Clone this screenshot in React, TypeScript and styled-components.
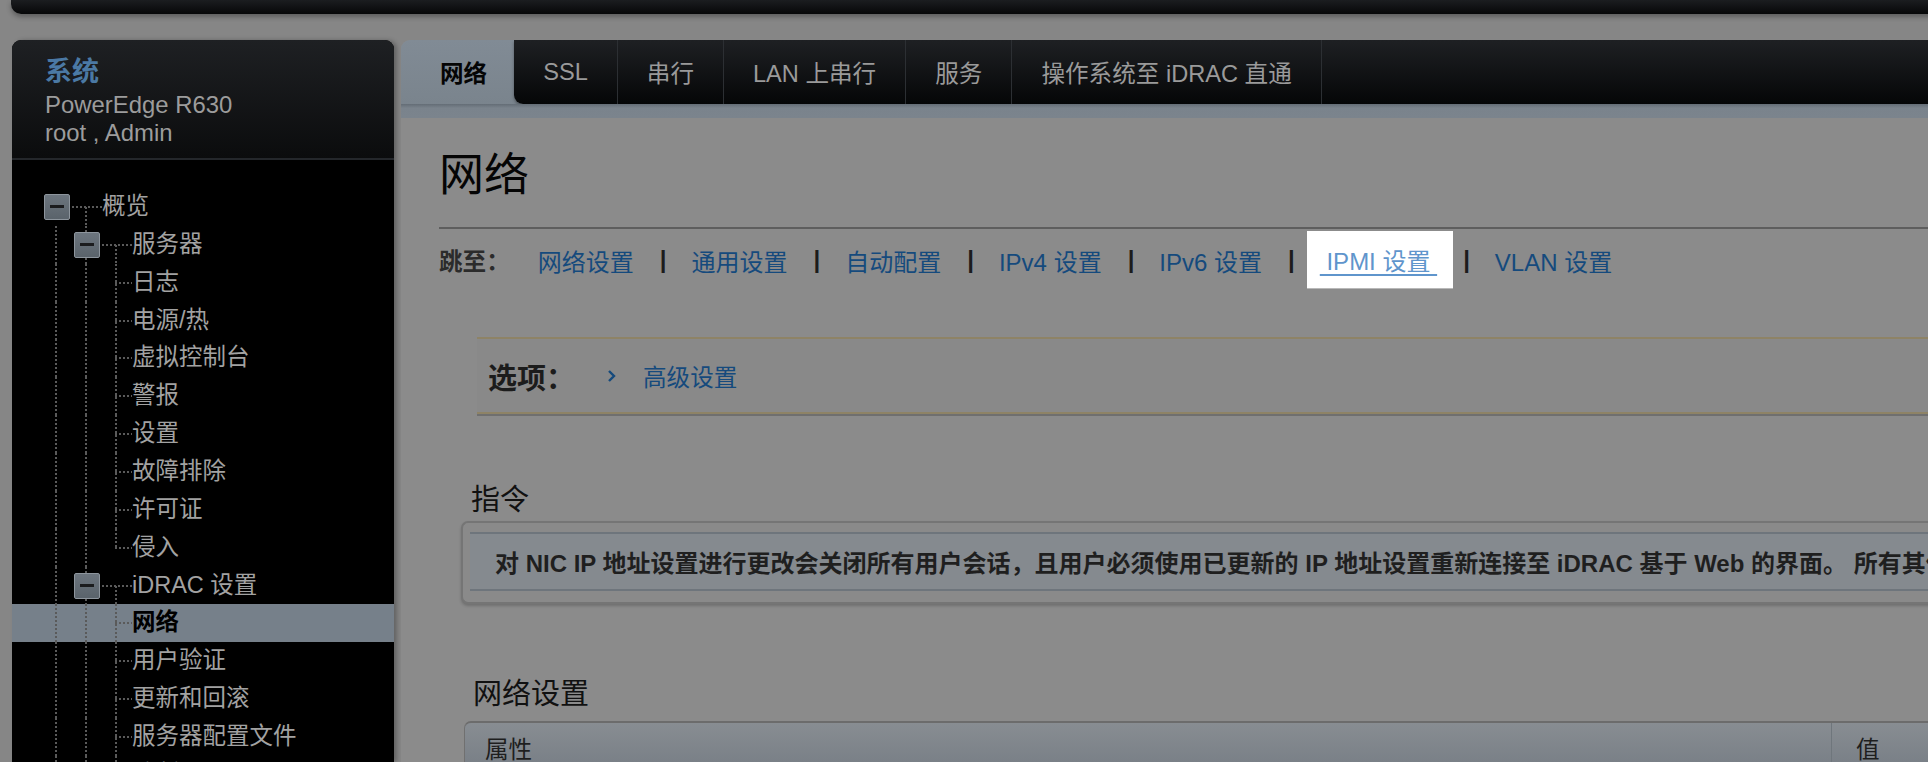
import React, { Fragment } from 'react';
import styled, { createGlobalStyle } from 'styled-components';

const FONT = `"Liberation Sans", Arial, "Noto Sans CJK SC", sans-serif`;

const GlobalStyle = createGlobalStyle`
  html, body { margin: 0; padding: 0; background: #868686; overflow: hidden; }
  body { font-family: ${FONT}; }
  * { box-sizing: border-box; }
`;

const Page = styled.div`
  width: 2300px;
  height: 762px;
  padding-left: 11px;
  display: flex;
  flex-direction: column;
  background: #868686;
`;

const TopBar = styled.div`
  flex: 0 0 14px;
  background: linear-gradient(#1b1d20, #060708);
  border-radius: 0 0 10px 10px;
  box-shadow: 0 3px 5px rgba(0, 0, 0, 0.3);
`;

const Body = styled.div`
  flex: 1;
  min-height: 0;
  display: flex;
  gap: 7px;
  margin-top: 26px;
  padding-left: 1px;
`;

/* ---------------- Sidebar ---------------- */

const Sidebar = styled.aside`
  flex: 0 0 382px;
  background: #000;
  border-radius: 9px 9px 0 0;
  box-shadow: 3px 0 4px rgba(0, 0, 0, 0.25);
  overflow: hidden;
  display: flex;
  flex-direction: column;
`;

const SideHeader = styled.div`
  padding: 13.5px 0 11px 33px;
  background: linear-gradient(#1e2023, #0b0c0d);
  border-bottom: 2px solid #24272b;
`;

const SysTitle = styled.div`
  font-size: 27px;
  font-weight: bold;
  line-height: 37px;
  color: #4b79a4;
`;

const SysLine = styled.div`
  font-size: 23.9px;
  line-height: 28px;
  color: #9c9c9c;
  &:first-of-type { margin-top: 2px; }
`;

const Tree = styled.div`
  padding-top: 28.5px;
`;

const Row = styled.div<{ $selected?: boolean }>`
  height: 37.86px;
  display: flex;
  align-items: stretch;
  padding-left: 30px;
  background: ${p => (p.$selected ? '#76808a' : 'transparent')};
`;

type VLine = 'none' | 'full' | 'top' | 'bottom';
type HLine = 'none' | 'half' | 'full';

const DOTS_V = 'repeating-linear-gradient(to bottom, #5a5a5a 0 2px, transparent 2px 4px)';
const DOTS_H = 'repeating-linear-gradient(to right, #5a5a5a 0 2px, transparent 2px 4px)';

const Guide = styled.span<{ $v: VLine; $h: HLine }>`
  position: relative;
  flex: 0 0 30px;
  display: flex;
  align-items: center;
  &::before {
    content: '';
    position: absolute;
    left: 13px;
    width: 2px;
    top: ${p => (p.$v === 'bottom' ? '50%' : '0')};
    bottom: ${p => (p.$v === 'top' ? '50%' : '0')};
    display: ${p => (p.$v === 'none' ? 'none' : 'block')};
    background: ${DOTS_V};
  }
  &::after {
    content: '';
    position: absolute;
    top: calc(50% - 1px);
    height: 2px;
    right: 0;
    left: ${p => (p.$h === 'full' ? '0' : '13px')};
    display: ${p => (p.$h === 'none' ? 'none' : 'block')};
    background: ${DOTS_H};
  }
`;

const Toggle = styled.span`
  position: relative;
  z-index: 1;
  margin-left: 2px;
  width: 26px;
  height: 26px;
  border: 1px solid #8d959d;
  border-radius: 2px;
  background: linear-gradient(#6c757e, #5a636b);
  display: flex;
  align-items: center;
  justify-content: center;
  &::after {
    content: '';
    width: 14px;
    height: 3px;
    background: #1b1c1e;
  }
`;

const NodeLabel = styled.span<{ $selected?: boolean }>`
  font-size: 23.5px;
  line-height: 37.86px;
  white-space: nowrap;
  color: ${p => (p.$selected ? '#000' : '#a2a2a2')};
  font-weight: ${p => (p.$selected ? 'bold' : 'normal')};
`;

interface Cell { v: VLine; h: HLine; box?: boolean }
interface Node { label: string; cells: Cell[]; selected?: boolean }

const root = (label: string): Node => ({
  label,
  cells: [{ v: 'none', h: 'none', box: true }, { v: 'bottom', h: 'full' }],
});
const branch = (label: string): Node => ({
  label,
  cells: [{ v: 'full', h: 'none' }, { v: 'full', h: 'none', box: true }, { v: 'bottom', h: 'full' }],
});
const leaf = (label: string, last = false, selected = false): Node => ({
  label,
  selected,
  cells: [{ v: 'full', h: 'none' }, { v: 'full', h: 'none' }, { v: last ? 'top' : 'full', h: 'half' }],
});

const nodes: Node[] = [
  root('概览'),
  branch('服务器'),
  leaf('日志'),
  leaf('电源/热'),
  leaf('虚拟控制台'),
  leaf('警报'),
  leaf('设置'),
  leaf('故障排除'),
  leaf('许可证'),
  leaf('侵入', true),
  branch('iDRAC 设置'),
  leaf('网络', false, true),
  leaf('用户验证'),
  leaf('更新和回滚'),
  leaf('服务器配置文件'),
  leaf('诊断'),
];

/* ---------------- Main ---------------- */

const Main = styled.main`
  flex: 1;
  min-width: 0;
  display: flex;
  flex-direction: column;
  background: #8b8b8b;
  border-radius: 9px 0 0 0;
  overflow: hidden;
`;

const TabBar = styled.div`
  flex: 0 0 64px;
  display: flex;
  background: linear-gradient(#818b95, #7a848d);
`;

const ActiveTab = styled.div`
  display: flex;
  align-items: center;
  padding: 0 27px 0 39px;
  font-size: 23.6px;
  font-weight: bold;
  color: #050505;
  white-space: nowrap;
`;

const TabTrack = styled.div`
  flex: 1;
  display: flex;
  background: linear-gradient(#1e2023, #050607);
  border-bottom-left-radius: 9px;
  box-shadow: 0 2px 3px rgba(0, 0, 0, 0.35);
`;

const Tab = styled.div`
  display: flex;
  align-items: center;
  padding: 0 29px;
  border-right: 1px solid #2c2f33;
  font-size: 23.6px;
  color: #9a9a9a;
  white-space: nowrap;
`;

const TabBand = styled.div`
  flex: 0 0 14px;
  background: linear-gradient(#646d76 0, #7a838c 4px, #7b848d 100%);
`;

const Content = styled.div`
  padding-left: 38px;
  display: flex;
  flex-direction: column;
`;

const PageTitle = styled.h1`
  margin: 31px 0 0;
  font-size: 45px;
  line-height: 54px;
  font-weight: normal;
  color: #050505;
`;

const Rule = styled.div`
  margin-top: 24px;
  height: 2px;
  background: #5e5e5e;
`;

const JumpRow = styled.nav`
  margin-top: 2px;
  height: 58px;
  display: flex;
  align-items: center;
  font-size: 24px;
  white-space: nowrap;
`;

const JumpLabel = styled.span`
  font-weight: bold;
  color: #2b2b2b;
  font-size: 23.6px;
  margin-right: 28px;
`;

const JumpLink = styled.a<{ $lit?: boolean }>`
  color: ${p => (p.$lit ? '#5f95cc' : '#154a7d')};
  text-decoration: ${p => (p.$lit ? 'underline' : 'none')};
  text-underline-offset: 4px;
  text-decoration-thickness: 2px;
  cursor: pointer;
`;

const Sep = styled.span`
  font-weight: bold;
  color: #1c1c1c;
  margin: 0 25px 0 26px;
`;

const Spotlight = styled.span`
  position: relative;
  z-index: 2;
  align-self: stretch;
  display: flex;
  align-items: center;
  margin: 0 -16px 0 -13px;
  padding: 0 16px 0 13px;
  background: #fff;
  border-bottom: 1px solid #b8b8b8;
`;

const OptionsBar = styled.div`
  margin: 48px 0 0 38px;
  height: 77px;
  display: flex;
  align-items: center;
  padding-left: 11px;
  background: #898989;
  border-top: 2px solid #8e8366;
  border-bottom: 2px solid #8e8366;
  box-shadow: 0 2px 0 #6f6f6f;
`;

const OptionsLabel = styled.span`
  font-size: 29px;
  font-weight: bold;
  color: #1c1c1c;
  margin-right: 32px;
`;

const Chevron = styled.svg`
  width: 9px;
  height: 14px;
  margin-right: 27px;
`;

const OptionLink = styled.a`
  font-size: 23.6px;
  color: #154a7d;
  cursor: pointer;
`;

const SectionTitle = styled.h2<{ $indent: number; $top: number }>`
  margin: ${p => p.$top}px 0 0 ${p => p.$indent}px;
  font-size: 29px;
  line-height: 36px;
  font-weight: normal;
  color: #111;
`;

const NoteBox = styled.div`
  margin: 3px 0 0 22px;
  padding: 9px 0 11px 7px;
  border: 2px solid #757575;
  border-right: none;
  border-radius: 7px 0 0 7px;
  background: #8a8a8a;
  box-shadow: 0 2px 3px rgba(0, 0, 0, 0.2);
`;

const NoteBand = styled.div`
  height: 58.5px;
  display: flex;
  align-items: center;
  padding-left: 25px;
  background: #858a8f;
  border-top: 2px solid #6e757c;
  border-bottom: 2px solid #6e757c;
  font-size: 24px;
  font-weight: bold;
  color: #1f1f1f;
  white-space: nowrap;
`;

const Table = styled.div`
  margin: 8.7px 0 0 25px;
  display: flex;
  height: 60px;
  border-top: 2px solid #6c6c6c;
  border-left: 1px solid #707070;
  border-radius: 7px 0 0 0;
  background: linear-gradient(#888d92, #737a82);
`;

const HeadCell = styled.div<{ $w?: number }>`
  flex: ${p => (p.$w ? `0 0 ${p.$w}px` : '1')};
  padding: 8px 0 0 ${p => (p.$w ? 20 : 24)}px;
  font-size: 23.6px;
  color: #1e1e1e;
  & + & { border-left: 1px solid #6f767c; }
`;

const tabs = ['SSL', '串行', 'LAN 上串行', '服务', '操作系统至 iDRAC 直通'];
const jumpLinks = ['网络设置', '通用设置', '自动配置', 'IPv4 设置', 'IPv6 设置', 'IPMI 设置', 'VLAN 设置'];
const LIT = 'IPMI 设置';

export default function App() {
  return (
    <>
      <GlobalStyle />
      <Page>
        <TopBar />
        <Body>
          <Sidebar>
            <SideHeader>
              <SysTitle>系统</SysTitle>
              <SysLine>PowerEdge R630</SysLine>
              <SysLine>root , Admin</SysLine>
            </SideHeader>
            <Tree>
              {nodes.map(n => (
                <Row key={n.label} $selected={n.selected}>
                  {n.cells.map((c, i) => (
                    <Guide key={i} $v={c.v} $h={c.h}>
                      {c.box && <Toggle />}
                    </Guide>
                  ))}
                  <NodeLabel $selected={n.selected}>{n.label}</NodeLabel>
                </Row>
              ))}
            </Tree>
          </Sidebar>

          <Main>
            <TabBar>
              <ActiveTab>网络</ActiveTab>
              <TabTrack>
                {tabs.map(t => (
                  <Tab key={t}>{t}</Tab>
                ))}
              </TabTrack>
            </TabBar>
            <TabBand />
            <Content>
              <PageTitle>网络</PageTitle>
              <Rule />
              <JumpRow>
                <JumpLabel>跳至：</JumpLabel>
                {jumpLinks.map((l, i) => (
                  <Fragment key={l}>
                    {i > 0 && <Sep>|</Sep>}
                    {l === LIT ? (
                      <Spotlight>
                        <JumpLink $lit>{'\u00a0' + l + '\u00a0'}</JumpLink>
                      </Spotlight>
                    ) : (
                      <JumpLink>{l}</JumpLink>
                    )}
                  </Fragment>
                ))}
              </JumpRow>

              <OptionsBar>
                <OptionsLabel>选项：</OptionsLabel>
                <Chevron viewBox="0 0 9 14">
                  <polyline points="2,2 7,7 2,12" fill="none" stroke="#154a7d" strokeWidth="2.4" />
                </Chevron>
                <OptionLink>高级设置</OptionLink>
              </OptionsBar>

              <SectionTitle $indent={32} $top={68}>指令</SectionTitle>
              <NoteBox>
                <NoteBand>
                  对 NIC IP 地址设置进行更改会关闭所有用户会话，且用户必须使用已更新的 IP 地址设置重新连接至 iDRAC 基于 Web 的界面。 所有其他会话也将被关闭。
                </NoteBand>
              </NoteBox>

              <SectionTitle $indent={34} $top={72.5}>网络设置</SectionTitle>
              <Table>
                <HeadCell $w={1366}>属性</HeadCell>
                <HeadCell>值</HeadCell>
              </Table>
            </Content>
          </Main>
        </Body>
      </Page>
    </>
  );
}
